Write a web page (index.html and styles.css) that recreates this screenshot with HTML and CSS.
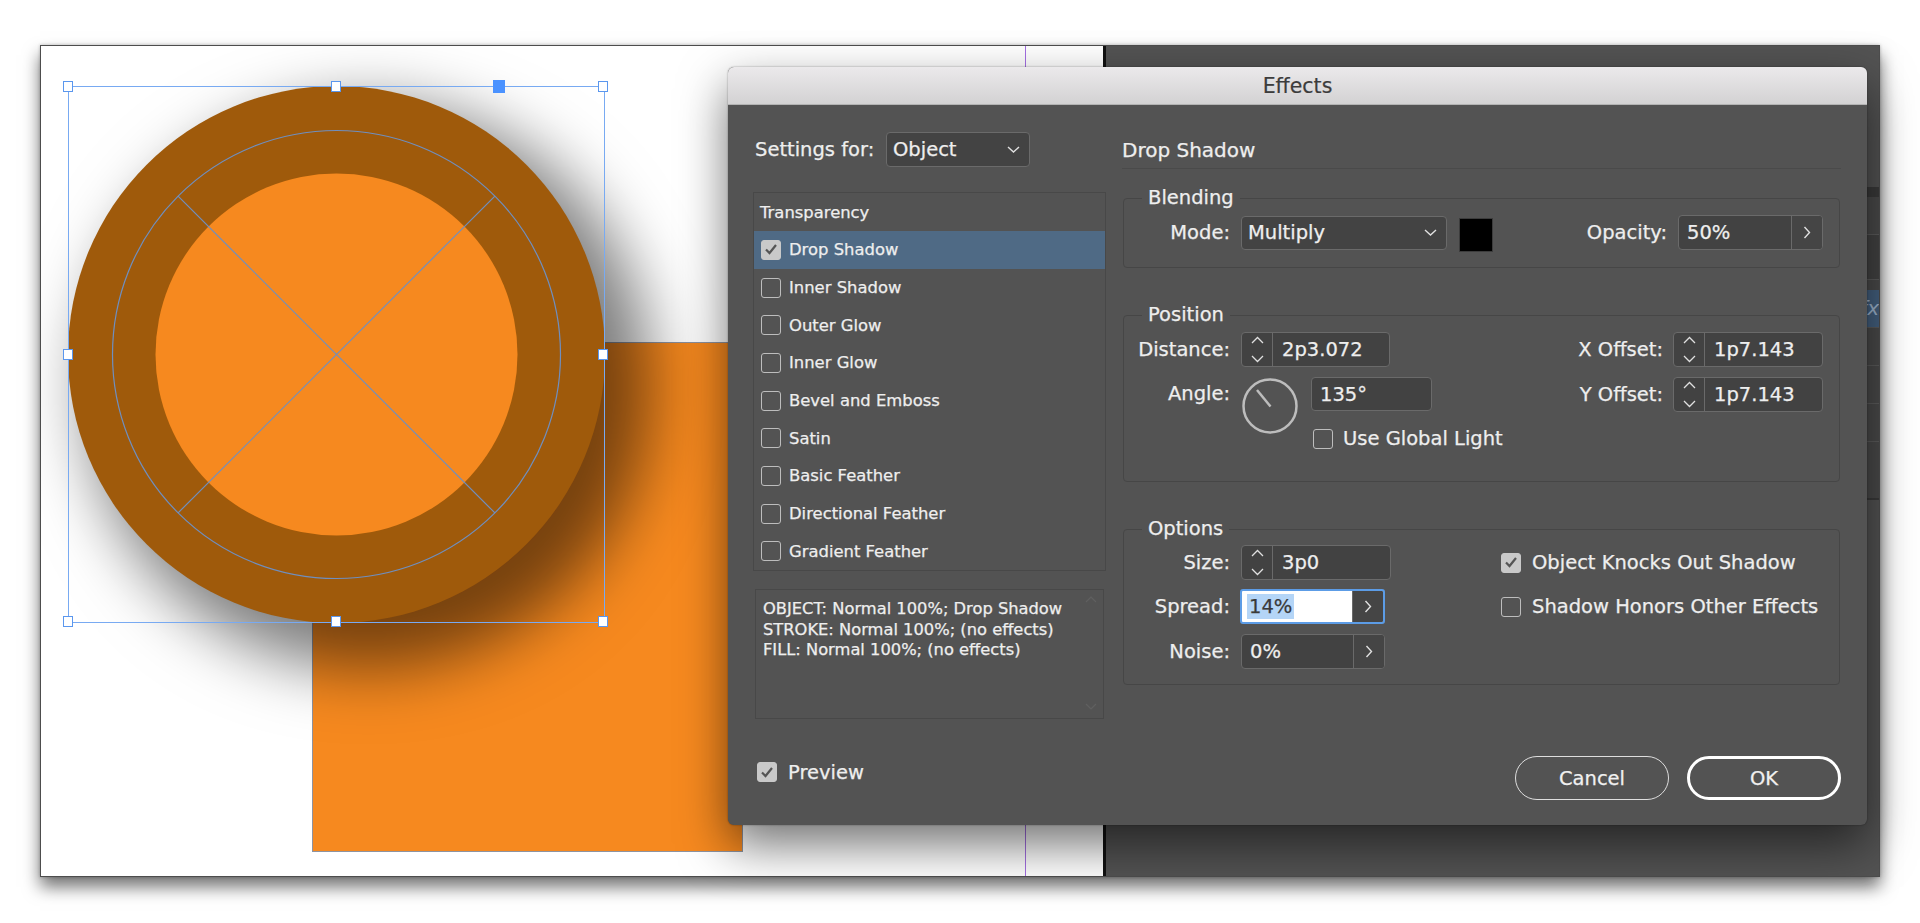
FILE: index.html
```html
<!DOCTYPE html>
<html lang="en">
<head>
    <meta charset="UTF-8">
    <title>Effects</title>
    <link rel="stylesheet" href="styles.css">
</head>
<body>
    <div class="frame">
        <div class="page">
            <div class="guide"></div>
            <div class="square"></div>
            <div class="circle">
                <svg width="537" height="537" viewBox="0 0 537 537">
                    <circle cx="268.5" cy="268.5" r="181" fill="#f6891f"/>
                    <circle cx="268.5" cy="268.5" r="224" fill="none" stroke="#6f8fc0" stroke-width="1.2"/>
                    <line x1="110.1" y1="110.1" x2="426.9" y2="426.9" stroke="#6f8fc0" stroke-width="1.2"/>
                    <line x1="426.9" y1="110.1" x2="110.1" y2="426.9" stroke="#6f8fc0" stroke-width="1.2"/>
                </svg>
            </div>
            <div class="selection">
                <span class="handle h-tl"></span>
                <span class="handle h-tc"></span>
                <span class="handle h-tr"></span>
                <span class="handle h-ml"></span>
                <span class="handle h-mr"></span>
                <span class="handle h-bl"></span>
                <span class="handle h-bc"></span>
                <span class="handle h-br"></span>
                <span class="handle-ref"></span>
            </div>
        </div>
        <div class="page-edge"></div>
        <div class="pasteboard">
            <div class="panel">
                <div class="panel-tabs"></div>
                <div class="panel-row"></div>
                <div class="panel-row dark"></div>
                <div class="panel-gap"></div>
                <div class="panel-row fx"><span>fx</span></div>
                <div class="panel-row"></div>
                <div class="panel-row"></div>
                <div class="panel-row"></div>
                <div class="panel-row trash"></div>
            </div>
        </div>

        <div class="dialog">
            <div class="titlebar">Effects</div>
            <div class="dialog-body">
                <div class="col-left">
                    <div class="settings-row">
                        <span class="settings-label">Settings for:</span>
                        <div class="select select-settings">
                            <span>Object</span>
                            <svg class="chev" width="13" height="7" viewBox="0 0 13 7"><path d="M1 1 L6.5 6 L12 1" fill="none" stroke="#e0e0e0" stroke-width="1.4"/></svg>
                        </div>
                    </div>

                    <ul class="effects-list">
                        <li class="list-head">Transparency</li>
                        <li class="selected"><span class="cb checked"><svg width="20" height="20" viewBox="0 0 20 20"><path d="M5 10.5 L8.5 14 L15 6" fill="none" stroke="#555" stroke-width="2.2"/></svg></span>Drop Shadow</li>
                        <li><span class="cb"></span>Inner Shadow</li>
                        <li><span class="cb"></span>Outer Glow</li>
                        <li><span class="cb"></span>Inner Glow</li>
                        <li><span class="cb"></span>Bevel and Emboss</li>
                        <li><span class="cb"></span>Satin</li>
                        <li><span class="cb"></span>Basic Feather</li>
                        <li><span class="cb"></span>Directional Feather</li>
                        <li><span class="cb"></span>Gradient Feather</li>
                    </ul>

                    <div class="summary">
                        OBJECT: Normal 100%; Drop Shadow<br>
                        STROKE: Normal 100%; (no effects)<br>
                        FILL: Normal 100%; (no effects)
                        <svg class="scroll-up" width="12" height="7" viewBox="0 0 12 7"><path d="M1 6 L6 1 L11 6" fill="none" stroke="#606060" stroke-width="1.2"/></svg>
                        <svg class="scroll-down" width="12" height="7" viewBox="0 0 12 7"><path d="M1 1 L6 6 L11 1" fill="none" stroke="#606060" stroke-width="1.2"/></svg>
                    </div>

                    <div class="preview">
                        <span class="cb checked"><svg width="20" height="20" viewBox="0 0 20 20"><path d="M5 10.5 L8.5 14 L15 6" fill="none" stroke="#555" stroke-width="2.2"/></svg></span>
                        <span>Preview</span>
                    </div>
                </div>

                <div class="col-right">
                    <h2 class="section-title">Drop Shadow</h2>

                    <fieldset class="group group-blending">
                        <legend>Blending</legend>
                        <div class="row">
                            <span class="lbl">Mode:</span>
                            <div class="select select-mode">
                                <span>Multiply</span>
                                <svg class="chev" width="13" height="7" viewBox="0 0 13 7"><path d="M1 1 L6.5 6 L12 1" fill="none" stroke="#e0e0e0" stroke-width="1.4"/></svg>
                            </div>
                            <div class="swatch"></div>
                            <span class="lbl-inline push">Opacity:</span>
                            <div class="field w145">
                                <span class="val">50%</span>
                                <span class="step"><svg width="8" height="13" viewBox="0 0 8 13"><path d="M1.5 1 L6.5 6.5 L1.5 12" fill="none" stroke="#e0e0e0" stroke-width="1.4"/></svg></span>
                            </div>
                        </div>
                    </fieldset>

                    <fieldset class="group group-position">
                        <legend>Position</legend>
                        <div class="position-grid">
                            <div class="position-left">
                                <div class="row">
                                    <span class="lbl">Distance:</span>
                                    <div class="field w149">
                                        <span class="spin"><svg width="13" height="27" viewBox="0 0 13 27"><path d="M1 7 L6.5 1.5 L12 7 M1 20 L6.5 25.5 L12 20" fill="none" stroke="#e0e0e0" stroke-width="1.3"/></svg></span>
                                        <span class="val">2p3.072</span>
                                    </div>
                                </div>
                                <div class="row angle-row">
                                    <span class="lbl lbl-tall">Angle:</span>
                                    <svg class="dial" width="56" height="56" viewBox="0 0 56 56">
                                        <circle cx="28" cy="28" r="26.5" fill="none" stroke="#bdbdbd" stroke-width="2.5"/>
                                        <line x1="28.5" y1="28.5" x2="15" y2="12" stroke="#bdbdbd" stroke-width="2.5"/>
                                    </svg>
                                    <div class="angle-col">
                                        <div class="field h34 w121"><span class="val">135°</span></div>
                                        <div class="check-line global-light">
                                            <span class="cb"></span>
                                            <span>Use Global Light</span>
                                        </div>
                                    </div>
                                </div>
                            </div>
                            <div class="offset-grid">
                                <span class="lbl-inline">X Offset:</span>
                                <div class="field w150">
                                    <span class="spin"><svg width="13" height="27" viewBox="0 0 13 27"><path d="M1 7 L6.5 1.5 L12 7 M1 20 L6.5 25.5 L12 20" fill="none" stroke="#e0e0e0" stroke-width="1.3"/></svg></span>
                                    <span class="val">1p7.143</span>
                                </div>
                                <span class="lbl-inline">Y Offset:</span>
                                <div class="field w150">
                                    <span class="spin"><svg width="13" height="27" viewBox="0 0 13 27"><path d="M1 7 L6.5 1.5 L12 7 M1 20 L6.5 25.5 L12 20" fill="none" stroke="#e0e0e0" stroke-width="1.3"/></svg></span>
                                    <span class="val">1p7.143</span>
                                </div>
                            </div>
                        </div>
                    </fieldset>

                    <fieldset class="group group-options">
                        <legend>Options</legend>
                        <div class="options-grid">
                            <div class="options-left">
                                <div class="row">
                                    <span class="lbl">Size:</span>
                                    <div class="field w150">
                                        <span class="spin"><svg width="13" height="27" viewBox="0 0 13 27"><path d="M1 7 L6.5 1.5 L12 7 M1 20 L6.5 25.5 L12 20" fill="none" stroke="#e0e0e0" stroke-width="1.3"/></svg></span>
                                        <span class="val">3p0</span>
                                    </div>
                                </div>
                                <div class="row row-gap9">
                                    <span class="lbl lbl-spread">Spread:</span>
                                    <div class="field focused w145">
                                        <span class="val"><span class="sel">14%</span></span>
                                        <span class="step"><svg width="8" height="13" viewBox="0 0 8 13"><path d="M1.5 1 L6.5 6.5 L1.5 12" fill="none" stroke="#e0e0e0" stroke-width="1.4"/></svg></span>
                                    </div>
                                </div>
                                <div class="row row-gap10">
                                    <span class="lbl">Noise:</span>
                                    <div class="field w144">
                                        <span class="val">0%</span>
                                        <span class="step"><svg width="8" height="13" viewBox="0 0 8 13"><path d="M1.5 1 L6.5 6.5 L1.5 12" fill="none" stroke="#e0e0e0" stroke-width="1.4"/></svg></span>
                                    </div>
                                </div>
                            </div>
                            <div class="options-right">
                                <div class="check-line opt-check">
                                    <span class="cb checked"><svg width="20" height="20" viewBox="0 0 20 20"><path d="M5 10.5 L8.5 14 L15 6" fill="none" stroke="#555" stroke-width="2.2"/></svg></span>
                                    <span>Object Knocks Out Shadow</span>
                                </div>
                                <div class="check-line opt-check row-gap9">
                                    <span class="cb"></span>
                                    <span>Shadow Honors Other Effects</span>
                                </div>
                            </div>
                        </div>
                    </fieldset>

                    <div class="buttons">
                        <button class="btn">Cancel</button>
                        <button class="btn btn-ok">OK</button>
                    </div>
                </div>
            </div>
        </div>
    </div>
</body>
</html>
```

FILE: styles.css
```css
body {
    margin: 0;
    background-color: #ffffff;
    font-family: "DejaVu Sans", "Noto Sans", sans-serif;
    color: #eeeeee;
    width: 1920px;
    height: 923px;
    overflow: hidden;
}

/* ---------- window frame / canvas ---------- */

.frame {
    position: relative;
    display: flex;
    margin: 45px 0 0 40px;
    width: 1840px;
    height: 832px;
    box-sizing: border-box;
    border: 1px solid #4d4d4d;
    box-shadow: 0 10px 16px rgba(0, 0, 0, 0.55), 0 0 3px rgba(0, 0, 0, 0.25);
}

.page {
    position: relative;
    width: 1062px;
    background-color: #ffffff;
    overflow: hidden;
}

.page-edge {
    width: 3px;
    background-color: #111111;
}

.pasteboard {
    position: relative;
    flex: 1;
    background-color: #535353;
    overflow: hidden;
}

.guide {
    position: absolute;
    left: 984px;
    top: 0;
    bottom: 0;
    width: 1px;
    background-color: #a46fe3;
}

.square {
    position: absolute;
    left: 271px;
    top: 296px;
    width: 431px;
    height: 510px;
    box-sizing: border-box;
    background-color: #f6891f;
    border: 1px solid #8e93a0;
}

.circle {
    position: absolute;
    left: 27px;
    top: 40px;
    width: 537px;
    height: 537px;
    border-radius: 50%;
    background-color: #9f5a0b;
    box-shadow: 32px 32px 64px 14px rgba(0, 0, 0, 0.52);
}

.circle svg {
    display: block;
}

.selection {
    position: absolute;
    left: 27px;
    top: 40px;
    width: 537px;
    height: 537px;
    box-sizing: border-box;
    border: 1px solid #78aaf2;
}

.handle {
    position: absolute;
    width: 10px;
    height: 11px;
    margin: -6px 0 0 -6px;
    box-sizing: border-box;
    background-color: #ffffff;
    border: 1px solid #5b97ee;
}

.h-tl { left: 0; top: 0; }
.h-tc { left: 50%; top: 0; }
.h-tr { left: 100%; top: 0; }
.h-ml { left: 0; top: 50%; }
.h-mr { left: 100%; top: 50%; }
.h-bl { left: 0; top: 100%; }
.h-bc { left: 50%; top: 100%; }
.h-br { left: 100%; top: 100%; }

.handle-ref {
    position: absolute;
    left: 424px;
    top: -7px;
    width: 12px;
    height: 13px;
    background-color: #4a92ff;
}

/* right-hand panel peeking out behind the dialog */
.panel {
    position: absolute;
    right: 0;
    top: 141px;
    width: 300px;
}

.panel-tabs {
    height: 10px;
    background-color: #3a3a3a;
}

.panel-row {
    height: 37px;
    background-color: #4a4a4a;
    border-bottom: 1px solid #5c5c5c;
}

.panel-row.dark {
    height: 44px;
    background-color: #434343;
}

.panel-gap {
    height: 10px;
    background-color: #4a4a4a;
}

.panel-row.fx {
    background-color: #44607f;
    text-align: right;
    font-style: italic;
    font-size: 20px;
    line-height: 37px;
    color: #9fb6cf;
}

.panel-row.trash {
    height: 56px;
    border-bottom: 2px solid #3a3a3a;
}

/* ---------- dialog ---------- */

.dialog {
    position: absolute;
    left: 687px;
    top: 21px;
    width: 1139px;
    height: 758px;
    background-color: #535353;
    border-radius: 6px;
    box-shadow: 0 20px 48px rgba(0, 0, 0, 0.55), 0 0 2px rgba(0, 0, 0, 0.4);
}

.titlebar {
    height: 38px;
    box-sizing: border-box;
    display: flex;
    align-items: center;
    justify-content: center;
    border-radius: 6px 6px 0 0;
    border-bottom: 1px solid #b3b3b3;
    background: linear-gradient(#ebe9eb, #d3d2d3);
    color: #3c3c3c;
    font-size: 20.5px;
    -webkit-text-stroke: 0.2px #3c3c3c;
}

.dialog-body {
    display: grid;
    grid-template-columns: 353px 719px;
    column-gap: 16px;
    padding: 27px 0 0 25px;
    font-size: 19.5px;
    -webkit-text-stroke: 0.25px currentColor;
}

/* left column */

.settings-row {
    display: flex;
    align-items: center;
    height: 35px;
    padding-left: 2px;
}

.settings-label {
    width: 120px;
    margin-right: 11px;
    white-space: nowrap;
}

.select {
    display: flex;
    align-items: center;
    justify-content: space-between;
    box-sizing: border-box;
    height: 35px;
    padding: 0 9px 0 6px;
    background-color: #434343;
    border: 1px solid #6a6a6a;
    border-radius: 4px;
}

.select-settings {
    width: 144px;
}

.select-mode {
    width: 206px;
    height: 34px;
}

.effects-list {
    list-style: none;
    margin: 25px 0 0;
    padding: 0;
    height: 379px;
    box-sizing: border-box;
    border: 1px solid #484848;
    font-size: 16.4px;
}

.effects-list li {
    display: flex;
    align-items: center;
    gap: 8px;
    height: 37.7px;
    padding-left: 7px;
}

.effects-list li.list-head {
    height: 38px;
    padding-left: 6px;
}

.effects-list li.selected {
    background-color: #4f6a85;
}

.cb {
    flex: none;
    display: block;
    width: 20px;
    height: 20px;
    box-sizing: border-box;
    border: 1.5px solid #bdbdbd;
    border-radius: 3px;
}

.cb.checked {
    background-color: #c9c9c9;
    border-color: #c9c9c9;
}

.cb svg {
    display: block;
    margin: -1.5px;
}

.summary {
    position: relative;
    margin: 18px 2px 0;
    height: 130px;
    box-sizing: border-box;
    padding: 9px 7px;
    border: 1px solid #484848;
    font-size: 16.3px;
    line-height: 20.7px;
}

.scroll-up {
    position: absolute;
    right: 6px;
    top: 6px;
}

.scroll-down {
    position: absolute;
    right: 6px;
    bottom: 8px;
}

.preview {
    display: flex;
    align-items: center;
    gap: 11px;
    margin-top: 43px;
    padding-left: 4px;
    height: 20px;
}

/* right column */

.section-title {
    margin: 0;
    height: 36px;
    line-height: 36px;
    border-bottom: 1px solid #4a4a4a;
    font-size: 20px;
    font-weight: normal;
}

.group {
    margin: 18px 1px 0;
    padding: 6px 16px 17px 0;
    min-width: 0;
    border: 1px solid #464646;
    border-radius: 4px;
}

.group legend {
    margin-left: 18px;
    padding: 0 6px;
    line-height: 22px;
    font-size: 19.5px;
}

.group-position,
.group-options {
    margin-top: 36px;
}

.group-position {
    padding-bottom: 33px;
}

.group-options {
    padding-top: 5px;
    padding-bottom: 15px;
}

.row {
    display: flex;
    align-items: center;
}

.row-gap9 {
    margin-top: 9px;
}

.row-gap10 {
    margin-top: 10px;
}

.lbl {
    width: 106px;
    margin-right: 11px;
    text-align: right;
    white-space: nowrap;
}

.lbl-spread {
    margin-right: 10px;
}

.lbl-inline {
    margin-right: 11px;
    white-space: nowrap;
}

.push {
    margin-left: auto;
}

.swatch {
    width: 34px;
    height: 34px;
    margin: 2px 0 -2px 12px;
    box-sizing: border-box;
    background-color: #000000;
    border: 1px solid #3c3c3c;
}

.field {
    display: flex;
    align-items: stretch;
    box-sizing: border-box;
    height: 35px;
    background-color: #424242;
    border: 1px solid #6a6a6a;
    border-radius: 4px;
    overflow: hidden;
}

.field .val {
    flex: 1;
    display: flex;
    align-items: center;
    padding-left: 8px;
    white-space: nowrap;
}

.field .spin {
    width: 30px;
    flex: none;
    display: flex;
    align-items: center;
    justify-content: center;
    border-right: 1px solid #6a6a6a;
}

.field .spin + .val {
    padding-left: 9px;
}

.field .step {
    width: 30px;
    flex: none;
    display: flex;
    align-items: center;
    justify-content: center;
    border-left: 1px solid #6a6a6a;
    background-color: #454545;
}

.h34 { height: 34px; }
.w121 { width: 121px; }
.w144 { width: 144px; }
.w145 { width: 145px; }
.w149 { width: 149px; }
.w150 { width: 150px; }

.field.focused {
    border: 2px solid #5c9ce6;
    border-radius: 3px;
    background-color: #ffffff;
}

.field.focused .val {
    padding-left: 5px;
    color: #3a3a3a;
}

.field.focused .step {
    border-left-color: #6a6a6a;
}

.sel {
    background-color: #b4d5f7;
    line-height: 25px;
    padding: 0 2px;
}

/* position group */

.position-grid {
    display: grid;
    grid-template-columns: 1fr auto;
    align-items: start;
}

.angle-row {
    margin-top: 10px;
    align-items: flex-start;
}

.lbl-tall {
    line-height: 34px;
}

.dial {
    display: block;
    margin: 1px 0 0 1px;
}

.angle-col {
    margin-left: 13px;
}

.check-line {
    display: flex;
    align-items: center;
    gap: 10px;
    white-space: nowrap;
}

.global-light {
    margin: 18px 0 0 2px;
    height: 19px;
}

.offset-grid {
    display: grid;
    grid-template-columns: auto 150px;
    row-gap: 10px;
    align-items: center;
    justify-items: end;
}

.offset-grid .lbl-inline {
    margin-right: 10px;
}

/* options group */

.options-grid {
    display: grid;
    grid-template-columns: 1fr 322px;
}

.opt-check {
    height: 35px;
    gap: 11px;
}

/* buttons */

.buttons {
    display: flex;
    justify-content: flex-end;
    gap: 18px;
    margin-top: 71px;
}

.btn {
    width: 154px;
    height: 44px;
    box-sizing: border-box;
    border: 1.5px solid #dedede;
    border-radius: 22px;
    background-color: #535353;
    color: #f0f0f0;
    font-family: "DejaVu Sans", "Noto Sans", sans-serif;
    font-size: 19.5px;
    padding: 0;
    -webkit-text-stroke: 0.25px #f0f0f0;
}

.btn-ok {
    border: 3px solid #ffffff;
}
```
